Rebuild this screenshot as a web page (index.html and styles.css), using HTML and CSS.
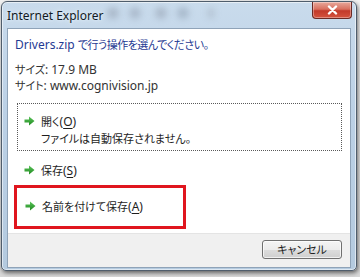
FILE: index.html
```html
<!DOCTYPE html>
<html lang="ja">
<head>
<meta charset="utf-8">
<title>Internet Explorer</title>
<link rel="stylesheet" href="styles.css">
</head>
<body>
<div class="window">
  <div class="titlebar">
    <span class="title">Internet Explorer</span>
    <span class="blob b1"></span><span class="blob b2"></span><span class="blob b3"></span><span class="blob b4"></span><span class="blob b5"></span>
    <button class="close" aria-label="閉じる">
      <svg width="11" height="10" viewBox="0 0 11 10"><path d="M2 1.5 L9 8.5 M9 1.5 L2 8.5" stroke="#fff" stroke-width="2.4" stroke-linecap="round"/></svg>
    </button>
  </div>
  <div class="client">
    <div class="main">
      <div class="heading">Drivers.zip <span class="ja">で行う操作を選んでください。</span></div>
      <div class="info">
        <div class="line"><span class="ja">サイズ</span>: 17.9 MB</div>
        <div class="line"><span class="ja">サイト</span>: www.cognivision.jp</div>
      </div>
      <div class="cmd cmd-focus">
        <svg class="arrow" width="11" height="10" viewBox="0 0 11 10"><defs><linearGradient id="g1" x1="0" y1="0" x2="0" y2="1"><stop offset="0" stop-color="#5cc45c"/><stop offset="1" stop-color="#1e8a1e"/></linearGradient></defs><path d="M0.5 3.6 H5 V0.5 L10.5 5 L5 9.5 V6.4 H0.5 Z" fill="url(#g1)"/></svg>
        <div class="cmd-text">
          <div><span class="ja">開く</span>(<u>O</u>)</div>
          <div class="ja">ファイルは自動保存されません。</div>
        </div>
      </div>
      <div class="cmd cmd-plain">
        <svg class="arrow" width="11" height="10" viewBox="0 0 11 10"><path d="M0.5 3.6 H5 V0.5 L10.5 5 L5 9.5 V6.4 H0.5 Z" fill="url(#g1)"/></svg>
        <div class="cmd-text"><div><span class="ja">保存</span>(<u>S</u>)</div></div>
      </div>
      <div class="cmd cmd-mark">
        <svg class="arrow" width="11" height="10" viewBox="0 0 11 10"><path d="M0.5 3.6 H5 V0.5 L10.5 5 L5 9.5 V6.4 H0.5 Z" fill="url(#g1)"/></svg>
        <div class="cmd-text"><div><span class="ja">名前を付けて保存</span>(<u>A</u>)</div></div>
      </div>
    </div>
    <div class="footer">
      <button class="btn"><span class="ja">キャンセル</span></button>
    </div>
  </div>
</div>
</body>
</html>
```

FILE: styles.css
```css
* { box-sizing: border-box; }
html, body { margin: 0; padding: 0; }
body {
  width: 360px;
  height: 277px;
  background: linear-gradient(180deg, #f2f2f2 0%, #d8d8d8 100%);
  font-family: "Noto Sans", "Noto Sans CJK JP", sans-serif;
  font-feature-settings: "palt";
  font-size: 12px;
  color: #1e1e1e;
  overflow: hidden;
}
.ja {
  font-family: "Noto Sans CJK JP", sans-serif;
  font-size: 11px;
}
.window {
  margin: 1px 0 0 1px;
  width: 356px;
  height: 270px;
  border: 1px solid #4f5d6c;
  border-radius: 6px 6px 5px 5px;
  background: linear-gradient(180deg, #c9dbec 0%, #bcd1e6 40%, #b4cadf 100%);
  box-shadow: 1px 2px 4px rgba(0,0,0,0.55), inset 0 0 0 1px rgba(255,255,255,0.55);
  padding: 0 5px 2px 5px;
  display: flex;
  flex-direction: column;
}
.titlebar {
  position: relative;
  height: 26px;
  flex: none;
  display: flex;
  align-items: center;
}
.title {
  position: relative;
  z-index: 1;
  font-family: "Noto Sans", sans-serif;
  font-size: 12px;
  color: #121a24;
  margin-top: 1px;
  text-shadow: 0 0 6px #e6f0fa, 0 0 3px #e6f0fa;
}
.blob {
  position: absolute;
  top: 5px;
  width: 12px;
  height: 12px;
  border-radius: 50%;
  background: rgba(120,130,145,0.35);
  filter: blur(3px);
}
.b1 { left: 100px; }
.b2 { left: 122px; background: rgba(110,120,140,0.3); }
.b3 { left: 148px; }
.b4 { left: 170px; background: rgba(100,115,135,0.3); }
.b5 { left: 200px; background: rgba(130,140,150,0.25); width: 8px; }
.close {
  position: absolute;
  right: -1px;
  top: 0;
  width: 40px;
  height: 17px;
  border: 1px solid #6b2a25;
  border-top: none;
  border-radius: 0 0 4px 4px;
  background: linear-gradient(180deg, #e8a99c 0%, #d9705f 45%, #c2392a 55%, #d5533e 100%);
  box-shadow: inset 0 0 0 1px rgba(255,255,255,0.35);
  display: flex;
  align-items: center;
  justify-content: center;
  padding: 0;
}
.client {
  flex: 1;
  min-height: 0;
  background: #ffffff;
  border: 1px solid #8fa3b8;
  display: flex;
  flex-direction: column;
}
.main {
  flex: 1;
  min-height: 0;
  padding: 7px 0 0 7px;
}
.heading {
  color: #1f3a93;
  line-height: 16px;
  height: 16px;
}
.heading .ja { letter-spacing: -0.5px; }
.info {
  margin-top: 9px;
  color: #333;
}
.line {
  line-height: 16px;
  height: 16px;
}
.cmd {
  display: flex;
  align-items: flex-start;
  color: #1e1e1e;
}
.arrow { flex: none; margin: 3px 6px 0 0; }
.cmd-text { line-height: 16px; }
.cmd-focus {
  margin: 10px 0 0 2px;
  width: 325px;
  height: 48px;
  border: 1px dotted #5a5a5a;
  padding: 9px 0 0 6px;
}
.cmd-plain {
  margin: 11px 0 0 9px;
  height: 18px;
}
.cmd-mark {
  margin: 5px 0 0 -1px;
  width: 172px;
  height: 44px;
  border: 3px solid #e0161e;
  padding: 10px 0 0 8px;
}
.cmd u { text-underline-offset: 2px; }
.footer {
  flex: none;
  height: 34px;
  background: #f0f0f0;
  border-top: 1px solid #e4e4e4;
  display: flex;
  justify-content: flex-end;
  align-items: center;
  padding-right: 8px;
}
.btn {
  width: 80px;
  height: 19px;
  margin-top: -3px;
  border: 1px solid #707070;
  border-radius: 3px;
  background: linear-gradient(180deg, #f4f4f4 0%, #ececec 50%, #dddddd 51%, #cfcfcf 100%);
  box-shadow: inset 0 0 0 1px rgba(255,255,255,0.7);
  font-family: "Noto Sans", "Noto Sans CJK JP", sans-serif;
  font-feature-settings: "palt";
  font-size: 12px;
  color: #1e1e1e;
  padding: 0;
  line-height: 16px;
}
```
